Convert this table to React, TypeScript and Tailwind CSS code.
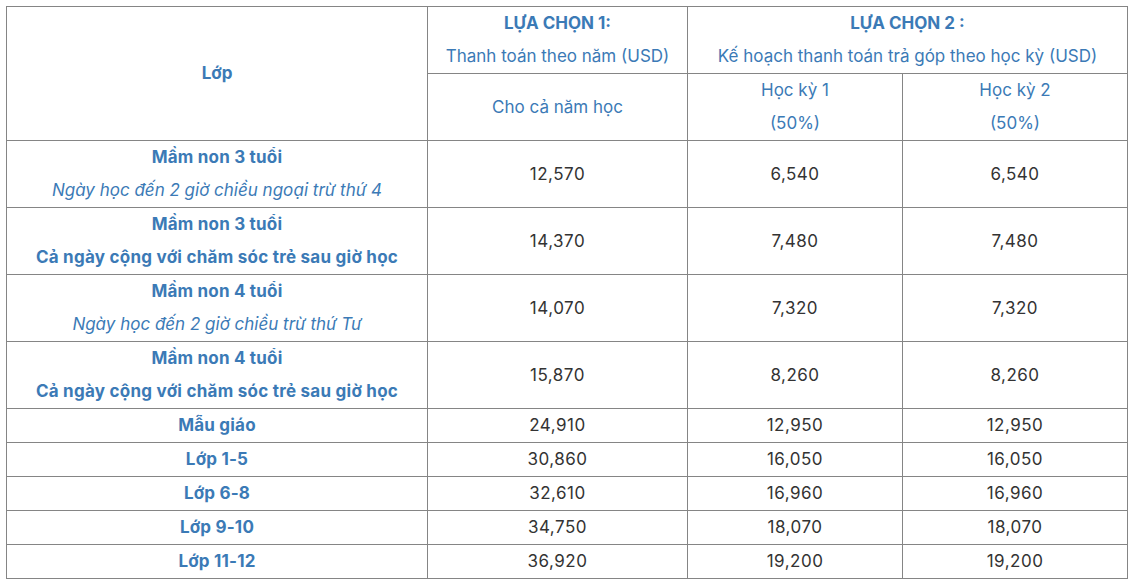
import React from 'react';

type Row = {
  title: string;
  note?: string;
  noteBold?: boolean;
  year: string;
  sem: string;
};

const rows: Row[] = [
  { title: 'Mầm non 3 tuổi', note: 'Ngày học đến 2 giờ chiều ngoại trừ thứ 4', year: '12,570', sem: '6,540' },
  { title: 'Mầm non 3 tuổi', note: 'Cả ngày cộng với chăm sóc trẻ sau giờ học', noteBold: true, year: '14,370', sem: '7,480' },
  { title: 'Mầm non 4 tuổi', note: 'Ngày học đến 2 giờ chiều trừ thứ Tư', year: '14,070', sem: '7,320' },
  { title: 'Mầm non 4 tuổi', note: 'Cả ngày cộng với chăm sóc trẻ sau giờ học', noteBold: true, year: '15,870', sem: '8,260' },
  { title: 'Mẫu giáo', year: '24,910', sem: '12,950' },
  { title: 'Lớp 1-5', year: '30,860', sem: '16,050' },
  { title: 'Lớp 6-8', year: '32,610', sem: '16,960' },
  { title: 'Lớp 9-10', year: '34,750', sem: '18,070' },
  { title: 'Lớp 11-12', year: '36,920', sem: '19,200' },
];

const cell = 'border border-[#858585] text-center align-middle p-0';
const num = `${cell} text-[#333] tracking-[0.5px]`;

export default function App() {
  return (
    <div className="min-h-screen bg-white pl-[6px] pt-[6px] font-['Inter','Liberation_Sans',sans-serif] text-[17px] leading-[33px]">
      <table className="table-fixed border-collapse w-[1121px]">
        <colgroup>
          <col className="w-[421px]" />
          <col className="w-[260px]" />
          <col className="w-[215px]" />
          <col className="w-[225px]" />
        </colgroup>
        <thead>
          <tr className="h-[67px]">
            <th rowSpan={2} className={`${cell} font-bold text-[#3b7ab6]`}>
              Lớp
            </th>
            <th className={`${cell} font-normal text-[#3b7ab6]`}>
              <div className="font-bold">LỰA CHỌN 1:</div>
              <div>Thanh toán theo năm (USD)</div>
            </th>
            <th colSpan={2} className={`${cell} font-normal text-[#3b7ab6]`}>
              <div className="font-bold">LỰA CHỌN 2 :</div>
              <div>Kế hoạch thanh toán trả góp theo học kỳ (USD)</div>
            </th>
          </tr>
          <tr className="h-[67px]">
            <th className={`${cell} font-normal text-[#3b7ab6]`}>Cho cả năm học</th>
            <th className={`${cell} font-normal text-[#3b7ab6]`}>
              <div>Học kỳ 1</div>
              <div>(50%)</div>
            </th>
            <th className={`${cell} font-normal text-[#3b7ab6]`}>
              <div>Học kỳ 2</div>
              <div>(50%)</div>
            </th>
          </tr>
        </thead>
        <tbody>
          {rows.map((r, i) => (
            <tr key={i} className={r.note ? 'h-[67px]' : 'h-[34px]'}>
              <td className={`${cell} text-[#3b7ab6]`}>
                <div className="font-bold tracking-[0.2px]">{r.title}</div>
                {r.note && (
                  <div className={r.noteBold ? 'font-bold tracking-[0.25px]' : 'italic'}>{r.note}</div>
                )}
              </td>
              <td className={num}>{r.year}</td>
              <td className={num}>{r.sem}</td>
              <td className={num}>{r.sem}</td>
            </tr>
          ))}
        </tbody>
      </table>
    </div>
  );
}
